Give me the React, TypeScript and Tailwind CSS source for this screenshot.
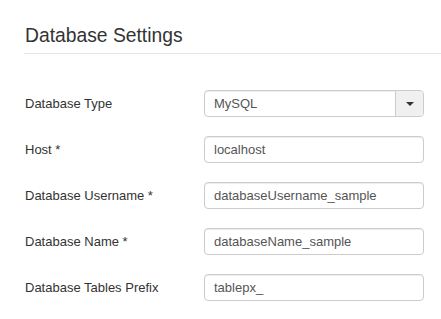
const fields = [
  { label: "Host *", value: "localhost" },
  { label: "Database Username *", value: "databaseUsername_sample" },
  { label: "Database Name *", value: "databaseName_sample" },
  { label: "Database Tables Prefix", value: "tablepx_" },
];

export default function App() {
  return (
    <div className="min-h-[319px] bg-white pl-6 pt-[25px] font-['Liberation_Sans',Arial,sans-serif] text-[#333]">
      <h2 className="border-b border-[#e5e5e5] pb-[6px] pl-px text-[19.3px] leading-[22px] font-normal">
        Database Settings
      </h2>
      <div className="mt-[36px] flex flex-col gap-[19px] text-[13px]">
        <div className="flex h-[27px] items-center">
          <label className="w-[180px] shrink-0 pl-px">Database Type</label>
          <div className="flex h-[27px] w-[220px] overflow-hidden rounded-[4px] border border-[#ccc] shadow-[inset_0_1px_1px_rgba(0,0,0,0.075)]">
            <div className="flex flex-1 items-center px-[9px] text-[#555]">MySQL</div>
            <div className="flex w-[28px] items-center justify-center border-l border-[#ccc] bg-[#f0f0f0]">
              <span className="h-0 w-0 border-x-[4px] border-t-[4px] border-x-transparent border-t-[#333]" />
            </div>
          </div>
        </div>
        {fields.map(({ label, value }) => (
          <div key={label} className="flex h-[27px] items-center">
            <label className="w-[180px] shrink-0 pl-px">{label}</label>
            <div className="flex h-[27px] w-[220px] items-center rounded-[4px] border border-[#ccc] px-[9px] text-[#555] shadow-[inset_0_1px_1px_rgba(0,0,0,0.075)]">
              {value}
            </div>
          </div>
        ))}
      </div>
    </div>
  );
}
